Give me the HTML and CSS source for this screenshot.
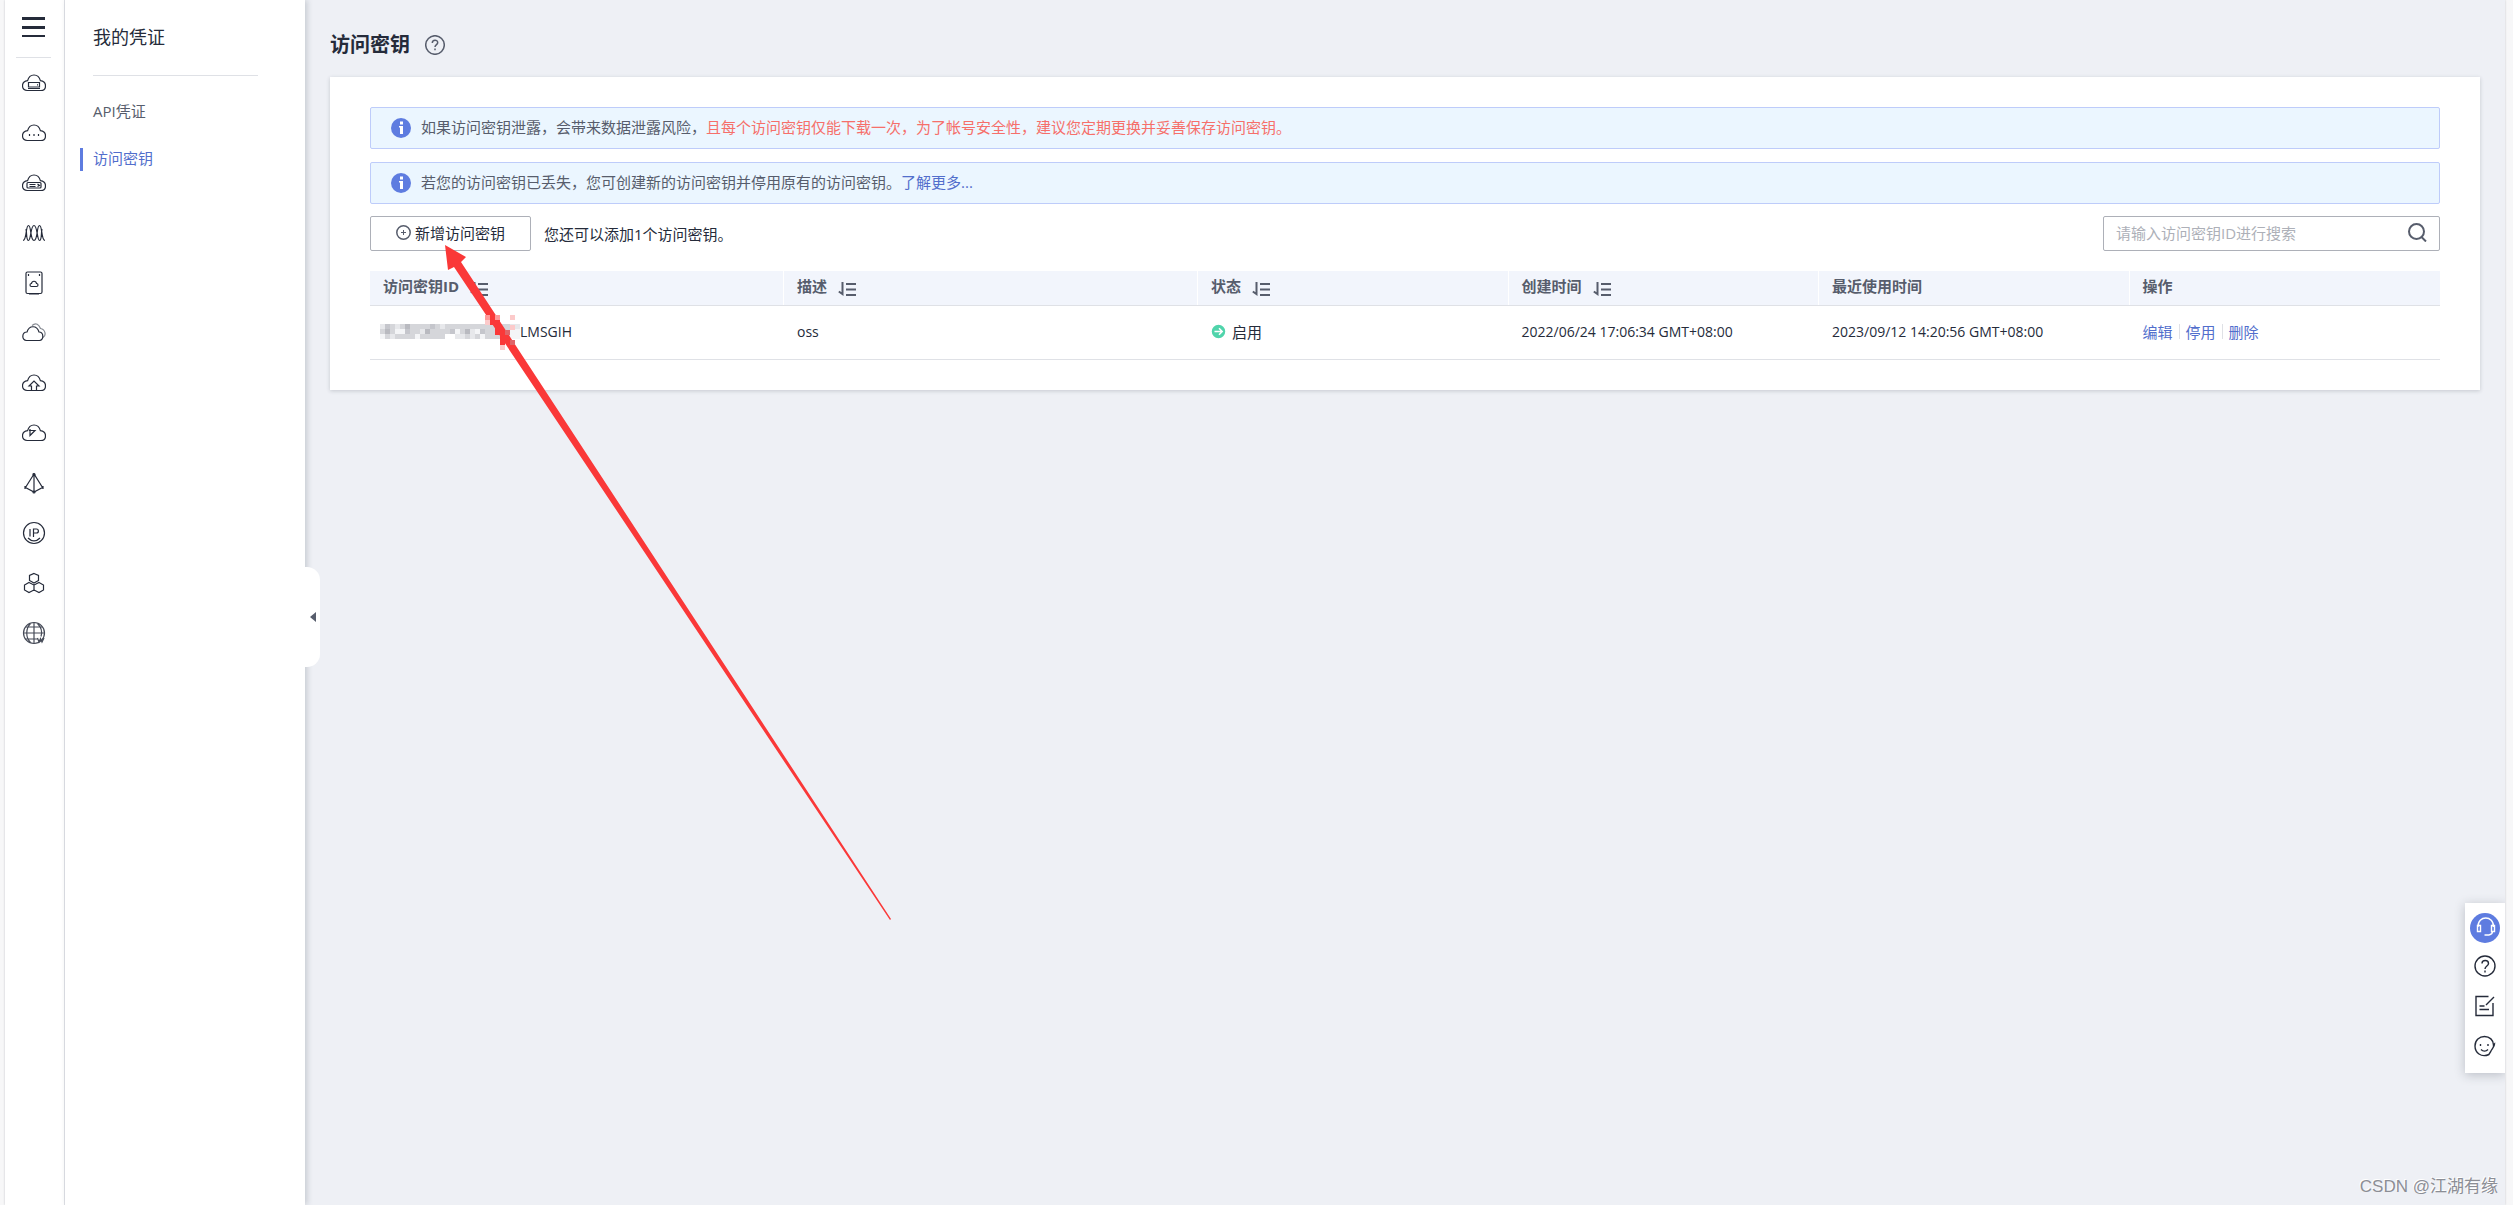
FILE: index.html
```
<!DOCTYPE html>
<html lang="zh-CN">
<head>
<meta charset="utf-8">
<title>访问密钥</title>
<link rel="stylesheet" href="styles.css">
</head>
<body>
<svg class="defs" aria-hidden="true">
  <symbol id="cloud" viewBox="0 0 24 24"><path d="M5.2 19.5C2.400 19.500.5 17.600.5 14.900C.5 12 2.400 10 5.600 9.600C6.500 6.200 8.900 4 12 4C15.100 4 17.500 6.200 18.400 9.600C21.600 10 23.500 12 23.500 14.900C23.500 17.600 21.600 19.500 18.800 19.500Z"/></symbol>
  <symbol id="sort" viewBox="0 0 18 14"><path d="M4.500 0V12L.8 9.500M8 2h10M8 7.500h10M8 13h10"/></symbol>
  <symbol id="info" viewBox="0 0 20 20"><circle cx="10" cy="10" r="10" fill="#5e7ce0"/><path fill="#fff" d="M9 3.500h3v3H9zM8 8h4v8H9v-6.500H8z"/></symbol>
</svg>
<div class="frame">
  <nav class="rail" aria-label="服务列表">
    <button class="menu" aria-label="菜单"><svg width="23" height="20" viewBox="0 0 23 20"><path d="M0 0h23v3H0zM0 9h23v3H0zM0 18h23v2H0z"/></svg></button>
    <a href="#" aria-label="弹性云服务器"><svg class="ico"><use href="#cloud"/><path d="M6.500 11.500h11v4.500h-11zM6 17.500h12M15 13.800h1"/></svg></a>
    <a href="#" aria-label="云耀服务器"><svg class="ico"><use href="#cloud"/><path d="M7.500 13v2M12 13v2M16.500 13v2"/></svg></a>
    <a href="#" aria-label="裸金属服务器"><svg class="ico"><use href="#cloud"/><rect x="5" y="11.500" width="14" height="5.500" rx="1"/><path d="M7.500 13.500h6M7.500 15.500h6M15.500 13l2 1.500-2 1"/></svg></a>
    <a href="#" aria-label="弹性伸缩"><svg class="ico"><path d="M1 19.500C5 19.500 3.500 4.500 6.500 4.500S8 19.500 12 19.500 14.500 4.500 17.500 4.500 19 19.500 23 19.500M4 8c1 4 0 11.500 2.500 11.500S8.500 4.500 12 4.500s3 15 5.500 15S19 12 20 8"/></svg></a>
    <a href="#" aria-label="云硬盘"><svg class="ico"><rect x="4" y="1" width="16" height="21.500" rx="1.500"/><path d="M7 23h10M6.500 3v2M17.500 3v2M9.500 15.500c-2 0-2-3 0-3 .5-3 4.500-3 5 0 2 0 2 3 0 3z"/></svg></a>
    <a href="#" aria-label="专属云"><svg class="ico"><path opacity=".55" d="M10 4.500C14 1 17 3.500 18.500 7.500c5 1 6 7 2.500 9"/><path d="M4.500 19.500c-5 0-5-8.500.5-8.500 2-7 10-7 12 0 5 0 5 8.500.5 8.500z"/></svg></a>
    <a href="#" aria-label="云备份"><svg class="ico"><use href="#cloud"/><path d="M9.500 19.500V15H7l5-5 5 5h-2.500v4.500"/></svg></a>
    <a href="#" aria-label="云容器"><svg class="ico"><use href="#cloud"/><path d="M7 9.500h6L8 14.500V8"/></svg></a>
    <a href="#" aria-label="虚拟私有云"><svg class="ico"><path d="M12 3L3.500 16.500 12 21l8.500-4.500zM12 3v18M3 15v3M21 15v3"/><circle cx="12" cy="3.500" r="1"/><circle cx="12" cy="21" r="1"/></svg></a>
    <a href="#" aria-label="弹性公网IP"><svg class="ico"><circle cx="12" cy="12" r="10.500"/><path d="M8 8v7.500M11.500 16V8h3c2.500 0 2.500 4 0 4h-3M6 17c4 4 8 4 12 0"/></svg></a>
    <a href="#" aria-label="区块链"><svg class="ico"><path d="M12 2.500l4.500 2v5L12 12 7.500 9.500v-5zM7 11.500l5 2.500v5L7 21.500 2.500 19v-5zM17 11.500l4.500 2.500v5L17 21.500 12 19v-5z"/></svg></a>
    <a href="#" aria-label="域名"><svg class="ico"><g opacity=".85"><circle cx="12" cy="12" r="10.500"/><path d="M12 1.500v21M1.500 12h21M4 6h16M4 18h12M8.500 2.500c-5 5-5 14 0 19M15.500 2.500c5 5 4.500 10 3.500 13M15.500 17l1.500 4 1.500-3.500 1.500 3.500 2-4"/></g></svg></a>
  </nav>
  <aside class="side">
    <h2>我的凭证</h2>
    <ul>
      <li><a href="#">API凭证</a></li>
      <li class="active"><a href="#">访问密钥</a></li>
    </ul>
    <button class="collapse" aria-label="收起"><svg width="6" height="10" viewBox="0 0 6 10"><path fill="#575d6c" d="M6 0v10L0 5z"/></svg></button>
  </aside>
  <main>
    <h1>访问密钥
      <svg width="20" height="20" viewBox="0 0 20 20" class="help"><circle cx="10" cy="10" r="9.300"/><path d="M7.300 8C7.300 4.300 12.700 4.300 12.700 7.700C12.700 9.500 10 9.700 10 12M10 13.500v1.700"/></svg>
    </h1>
    <section class="card">
      <div class="alerts">
        <div class="alert"><svg width="20" height="20"><use href="#info"/></svg><p>如果访问密钥泄露，会带来数据泄露风险，<span class="warn">且每个访问密钥仅能下载一次，为了帐号安全性，建议您定期更换并妥善保存访问密钥。</span></p></div>
        <div class="alert"><svg width="20" height="20"><use href="#info"/></svg><p>若您的访问密钥已丢失，您可创建新的访问密钥并停用原有的访问密钥。<a href="#">了解更多...</a></p></div>
      </div>
      <div class="toolbar">
        <button class="add"><svg width="15" height="15" viewBox="0 0 15 15"><circle cx="7.500" cy="7.500" r="6.700" stroke-width="1.500"/><path d="M7.500 5v5M5 7.500h5"/></svg>新增访问密钥</button>
        <span>您还可以添加1个访问密钥。</span>
        <label class="search">
          <input type="text" placeholder="请输入访问密钥ID进行搜索" aria-label="搜索访问密钥ID">
          <svg width="19" height="19" viewBox="0 0 19 19"><circle cx="8.500" cy="8.500" r="7.500"/><path d="M13.500 14l4.500 4.500"/></svg>
        </label>
      </div>
      <table>
        <colgroup><col class="wide"><col class="wide"><col><col><col><col></colgroup>
        <thead><tr>
          <th>访问密钥ID<svg class="sort"><use href="#sort"/></svg></th>
          <th>描述<svg class="sort"><use href="#sort"/></svg></th>
          <th>状态<svg class="sort"><use href="#sort"/></svg></th>
          <th>创建时间<svg class="sort"><use href="#sort"/></svg></th>
          <th>最近使用时间</th>
          <th>操作</th>
        </tr></thead>
        <tbody><tr>
          <td class="latin"><div class="key"><svg width="140" height="15" viewBox="0 0 28 3" shape-rendering="crispEdges" aria-hidden="true">
            <path fill="#d5d6da" d="M0 0h27v2H0zM1 2h12v1H1zM16 2h11v1H16z"/>
            <path fill="#b9bac0" d="M1 1h1v1H1zM5 0h1v1H5zM9 1h1v1H9zM17 1h1v1H17z"/>
            <path fill="#c5c6cc" d="M1 0h1v1H1zM5 1h1v1H5zM10 0h1v1H10zM14 1h1v1H14zM20 1h1v1H20zM23 1h1v1H23z"/>
            <path fill="#e7e8eb" d="M0 0h1v1H0zM3 0h1v1H3zM8 1h1v1H8zM12 0h1v1H12zM18 1h1v1H18zM2 2h1v1H2zM7 2h1v1H7zM15 2h2v1H15zM18 2h1v1H18zM24 2h1v1H24zM26 0h2v2H26z"/>
            <path fill="#f4f5f7" d="M0 2h1v1H0zM3 1h2v1H3zM7 2h1v1H7zM15 1h1v1H15zM19 1h1v1H19zM20 2h1v1H20zM26 1h2v2H26z"/>
          </svg>LMSGIH</div></td>
          <td class="latin">oss</td>
          <td><span class="status"><svg width="15" height="15" viewBox="0 0 15 15"><circle cx="7.500" cy="7.500" r="7.500" fill="#50d4ab"/><path d="M3.500 7.500h7.500M8 4.300l3.200 3.200L8 10.700"/></svg>启用</span></td>
          <td class="latin">2022/06/24 17:06:34 GMT+08:00</td>
          <td class="latin">2023/09/12 14:20:56 GMT+08:00</td>
          <td><div class="ops"><a href="#">编辑</a><a href="#">停用</a><a href="#">删除</a></div></td>
        </tr></tbody>
      </table>
    </section>
  </main>
</div>
<div class="float">
  <button class="service" aria-label="客服"><svg width="30" height="30" viewBox="0 0 30 30"><path d="M8 14C7.500 2 24 2 23.500 14M7.500 12.500h3v6h-3zM24.500 12.500h-3v6h3zM22.500 18.500c0 2-1.500 3-3.500 3.500M14.500 22h4.500"/></svg></button>
  <button aria-label="帮助"><svg width="22" height="22" viewBox="0 0 22 22"><circle cx="11" cy="11" r="10"/><path d="M8 8.500C8 4.500 14.500 4.500 14.500 8.500C14.500 11 11 11 11 14M11 15.500v2"/></svg></button>
  <button aria-label="建议"><svg width="22" height="22" viewBox="0 0 22 22"><path d="M14.500 1.500H2v19h17V8M5.500 11h5M5.500 14.500h9.500M12 10l8-8"/></svg></button>
  <button aria-label="反馈"><svg width="22" height="22" viewBox="0 0 22 22"><path d="M15 19.500C7 23 1 17.500 1 11 1 5 5.500 1.500 10.500 1.500c5 0 9 3.500 9 8.500l1-1c0 3-3 5-4 8l-2 3M7 14.500c2 2 5 2 7 0M6.500 9v2M14 9v2"/></svg></button>
</div>
<svg class="arrow" width="447" height="676" viewBox="0 0 447 676" aria-hidden="true">
  <path fill="#fa3838" d="M0 0L21 12 16 17 446 674 445 675 9 22 3 25z"/>
  <g shape-rendering="crispEdges">
    <path fill="#fccaca" d="M40 75h5v5h-5zM65 70h5v5h-5zM55 100h5v5h-5zM65 80h5v5h-5z"/>
    <path fill="#f99" d="M50 70h5v5h-5zM40 70h5v5h-5z"/>
    <path fill="#fa3838" d="M45 75h10v5H45zM50 80h5v10h-5zM55 90h5v10h-5z"/>
    <path fill="#e06468" d="M60 85h5v5h-5zM65 95h5v5h-5z"/>
  </g>
</svg>
<div class="watermark">CSDN @江湖有缘</div>
</body>
</html>
```
FILE: styles.css
```
* { box-sizing: border-box; }
body {
  margin: 0;
  padding: 0 8px 0 5px;
  min-height: 100vh;
  position: relative;
  overflow: hidden;
  background: #f7f7f8;
  color: #252b3a;
  font: 15px/20px "Open Sans", "Noto Sans CJK SC", sans-serif;
}
h1, h2, p, ul { margin: 0; padding: 0; }
ul { list-style: none; }
a { color: #526ecc; text-decoration: none; }
button { font: inherit; color: inherit; padding: 0; border: 0; background: none; }
svg { flex: none; fill: none; stroke-width: 2; }
.defs { position: absolute; width: 0; height: 0; }

.frame {
  display: flex;
  min-height: 100vh;
  background: #eef0f5;
  box-shadow: 0 0 2px #c4c5ca;
}
.rail {
  width: 60px;
  padding-right: 2px;
  display: flex;
  flex-direction: column;
  align-items: center;
  background: #fff;
  border-right: 1px solid #dfe1e6;
}
.menu {
  width: 35px;
  height: 58px;
  padding: 0 0 4px 6px;
  display: flex;
  align-items: center;
  border-bottom: 1px solid #dfe1e6;
}
.menu path { fill: #252b3a; }
.rail a { height: 50px; display: flex; align-items: center; }
.ico { width: 24px; height: 24px; stroke: #252b3a; stroke-width: 1.200; }

.side {
  width: 240px;
  position: relative;
  padding: 24px 47px 0 28px;
  background: #fff;
  box-shadow: 2px 0 6px rgba(37, 43, 58, .2);
}
.side h2 {
  padding-bottom: 25px;
  margin-bottom: 25px;
  border-bottom: 1px solid #dfe1e6;
  font-size: 18px;
  line-height: 26px;
  font-weight: 400;
}
.side li { height: 23px; margin-bottom: 24px; line-height: 20px; }
.side li a { color: #575d6c; }
.side .active { margin-left: -13px; padding-left: 10px; border-left: 3px solid #5e7ce0; }
.side .active a { color: #526ecc; }
.collapse {
  position: absolute;
  left: 100%;
  top: 567px;
  width: 15px;
  height: 100px;
  border-radius: 0 13px 13px 0;
  background: #fff;
  display: flex;
  align-items: center;
  justify-content: center;
}

main { flex: 1; min-width: 0; padding: 30px 25px; }
h1 {
  display: flex;
  align-items: center;
  gap: 15px;
  margin-bottom: 17px;
  font-size: 20px;
  line-height: 30px;
}
.help { stroke: #575d6c; stroke-width: 1.500; }
.card { padding: 30px 40px; background: #fff; box-shadow: 0 1px 4px rgba(37, 43, 58, .2); }
.alerts { display: grid; gap: 13px; margin-bottom: 12px; }
.alert {
  height: 42px;
  padding: 0 20px;
  display: flex;
  align-items: center;
  gap: 10px;
  background: #ebf6ff;
  border: 1px solid #beccfa;
  border-radius: 2px;
  color: #575d6c;
}
.alert p { padding-bottom: 2px; }
.warn { color: #f66f6a; }
.toolbar { display: flex; align-items: center; gap: 13px; margin-bottom: 20px; }
.add {
  width: 161px;
  height: 35px;
  padding-bottom: 2px;
  display: flex;
  align-items: center;
  justify-content: center;
  gap: 4px;
  border: 1px solid #adb0b8;
  border-radius: 2px;
}
.add svg { stroke: #575d6c; stroke-width: 1; }
.search {
  width: 337px;
  height: 35px;
  margin-left: auto;
  padding: 0 12px 2px;
  display: flex;
  align-items: center;
  border: 1px solid #adb0b8;
  border-radius: 2px;
}
.search input { flex: 1; min-width: 0; padding: 0; border: 0; outline: 0; background: none; font: inherit; }
.search input::placeholder { color: #adb0b8; }
.search svg { stroke: #575d6c; }

table { width: 100%; table-layout: fixed; border-collapse: separate; border-spacing: 0; }
col { width: 15%; }
.wide { width: 20%; }
th, td { padding: 0 13px 2px; text-align: left; border-bottom: 1px solid #dfe1e6; }
th {
  height: 35px;
  padding-bottom: 4px;
  background: linear-gradient(#fff, #fff) right / 1px 100% no-repeat #f2f5fc;
  color: #575d6c;
}
th:last-child { background: #f2f5fc; }
td { height: 54px; }
.sort { width: 18px; height: 14px; margin-left: 11px; vertical-align: -4px; stroke: #575d6c; }
.latin { font-size: 14px; }
.key, .status, .ops { display: flex; align-items: center; }
.key { margin-left: -3px; }
.status { gap: 6px; }
.status svg { stroke: #fff; stroke-width: 1.500; }
.ops a + a { margin-left: 6px; padding-left: 7px; background: linear-gradient(#dfe1e6, #dfe1e6) left / 1px 15px no-repeat; }

.float {
  position: fixed;
  right: 8px;
  bottom: 132px;
  width: 40px;
  height: 170px;
  padding-top: 10px;
  display: flex;
  flex-direction: column;
  align-items: center;
  gap: 18px;
  background: #fff;
  box-shadow: 0 2px 10px rgba(37, 43, 58, .25);
  clip-path: inset(-20px 0 -20px -20px);
}
.float button { height: 22px; display: flex; }
.float svg { stroke: #252b3a; stroke-width: 1.400; }
.float .service { height: 30px; margin-bottom: -6px; border-radius: 50%; background: #5e7ce0; }
.float .service svg { stroke: #fff; }
.arrow { position: absolute; left: 445px; top: 245px; pointer-events: none; }
.watermark {
  position: absolute;
  right: 15px;
  bottom: 6px;
  font: 17px/24px "Liberation Sans", "Noto Sans CJK SC", sans-serif;
  color: #8c8e95;
  text-shadow: -1px -1px 0 #fff;
}
```
